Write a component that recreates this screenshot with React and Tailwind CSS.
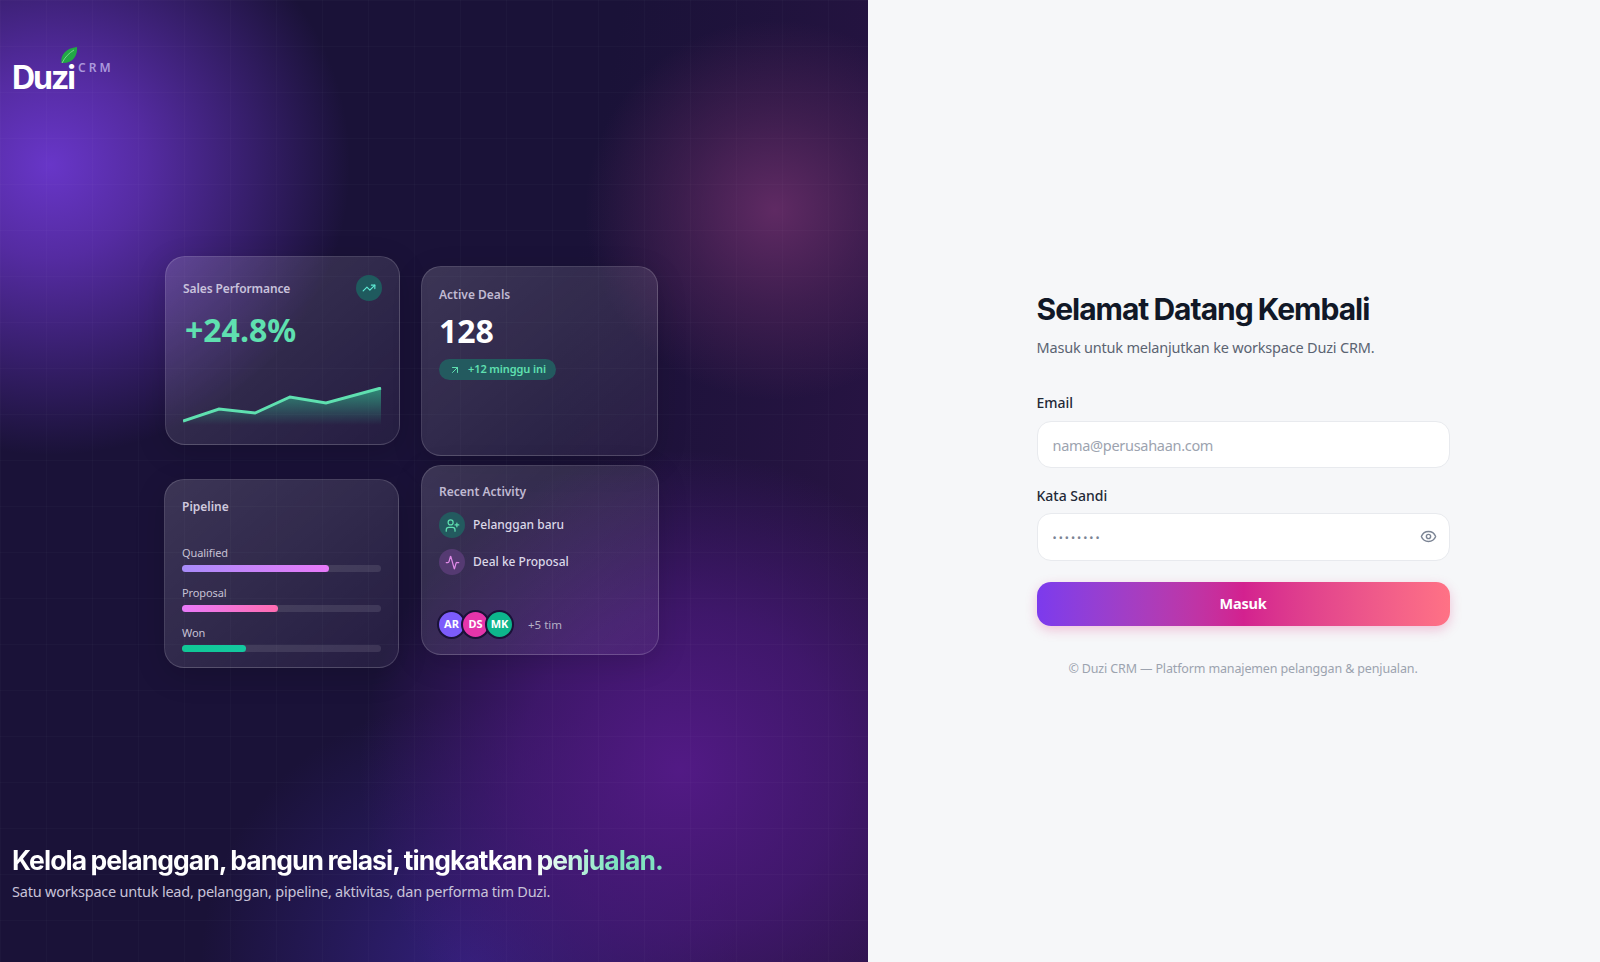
import { ArrowUpRight, Eye, TrendingUp, UserPlus, Activity } from 'lucide-react'

const head = { fontFamily: 'Inter, sans-serif' }

const bars = [
  { label: 'Qualified', width: '74%', cls: 'bg-gradient-to-r from-[#a78bfa] to-[#e879f9]' },
  { label: 'Proposal', width: '48%', cls: 'bg-gradient-to-r from-[#e879f9] to-[#ff6bb0]' },
  { label: 'Won', width: '32%', cls: 'bg-gradient-to-r from-[#10c896] to-[#14c8a0]' },
]

const cardCls =
  'rounded-[20px] border border-white/15 bg-gradient-to-br from-white/15 to-white/5 shadow-[0_8px_30px_rgba(0,0,0,0.15)]'

function Logo() {
  return (
    <div className="flex items-start text-white">
      <div className="relative">
        <span className="block text-[32px] leading-[40px] font-bold tracking-[-2px]" style={head}>Duzi</span>
        <svg className="absolute left-[48px] top-[-12px]" width="18" height="19" viewBox="0 0 18 19">
          <path d="M1.5 17C0 9 6 2 17 1c1 9-5 17-15.500 16z" fill="#22a845" />
          <path d="M2 17C5 11 9 7 14 4" stroke="#8de0a0" strokeWidth="0.8" fill="none" />
        </svg>
      </div>
      <span className="ml-[4px] mt-[1px] text-[12px] leading-[18px] font-semibold tracking-[3px] text-[#ab98dc]">CRM</span>
    </div>
  )
}

function SalesCard() {
  return (
    <div className={`${cardCls} h-[189px] w-[235px] px-[17px] pt-[16px]`}>
      <div className="flex items-center justify-between">
        <span className="pt-[2px] text-[12px] leading-[28px] font-semibold tracking-[-0.1px] text-[#c9c2dc]">Sales Performance</span>
        <span className="flex h-[26px] w-[26px] items-center justify-center rounded-full bg-[#1f5a5e]">
          <TrendingUp size={14} className="text-[#5eead4]" />
        </span>
      </div>
      <div className="mt-[7px] ml-[2px] text-[32px] leading-[40px] font-bold text-[#5fe0b0]">+24.8%</div>
      <svg className="mt-[37px] block" width="200" height="40" viewBox="0 0 200 40">
        <defs>
          <linearGradient id="spark" x1="0" y1="0" x2="0" y2="1">
            <stop offset="0%" stopColor="#34d399" stopOpacity="0.6" />
            <stop offset="100%" stopColor="#34d399" stopOpacity="0" />
          </linearGradient>
        </defs>
        <path d="M0 34L36 22 72 26 107 10 143 16 198 1V38H0z" fill="url(#spark)" />
        <path d="M0 34L36 22 72 26 107 10 143 16 198 1" stroke="#5fe0b0" strokeWidth="3" fill="none" />
      </svg>
    </div>
  )
}

function DealsCard() {
  return (
    <div className={`${cardCls} h-[190px] w-[237px] px-[17px] pt-[18px]`}>
      <div className="text-[12px] leading-[20px] font-semibold text-[#c0bad2]">Active Deals</div>
      <div className="mt-[6px] text-[32px] leading-[40px] font-bold text-white">128</div>
      <div className="mt-[8px] inline-flex h-[21px] items-center gap-[7px] rounded-full bg-[#235a5f] px-[10px] text-[11px] font-semibold tracking-[-0.1px] text-[#5fe0b0]">
        <ArrowUpRight size={12} />
        <span>+12 minggu ini</span>
      </div>
    </div>
  )
}

function PipelineCard() {
  return (
    <div className={`${cardCls} ml-[-1px] h-[189px] w-[235px] px-[17px] pt-[17px]`}>
      <div className="text-[12px] leading-[20px] font-semibold text-[#cfc9de]">Pipeline</div>
      <div className="mt-[27px] flex flex-col gap-[12px]">
        {bars.map((b) => (
          <div key={b.label}>
            <div className="text-[11px] leading-[17px] tracking-[-0.1px] text-[#c6c1d4]">{b.label}</div>
            <div className="mt-[4px] h-[7px] rounded-full bg-white/10">
              <div className={`h-full rounded-full ${b.cls}`} style={{ width: b.width }} />
            </div>
          </div>
        ))}
      </div>
    </div>
  )
}

function ActivityCard() {
  return (
    <div className={`${cardCls} h-[190px] w-[238px] px-[17px] pt-[16px]`}>
      <div className="text-[12px] leading-[20px] font-semibold text-[#c0bad2]">Recent Activity</div>
      <div className="mt-[10px] flex flex-col gap-[11px]">
        <div className="flex items-center gap-[8px]">
          <span className="flex h-[26px] w-[26px] items-center justify-center rounded-full bg-[#235a5f]">
            <UserPlus size={15} className="text-[#5fe0b0]" />
          </span>
          <span className="text-[12px] font-medium text-[#dcd8e8]">Pelanggan baru</span>
        </div>
        <div className="flex items-center gap-[8px]">
          <span className="flex h-[26px] w-[26px] items-center justify-center rounded-full bg-[#553a72]">
            <Activity size={15} className="text-[#e08be8]" />
          </span>
          <span className="text-[12px] font-medium text-[#dcd8e8]">Deal ke Proposal</span>
        </div>
      </div>
      <div className="ml-[-2px] mt-[35px] flex items-center">
        <span className="flex h-[29px] w-[29px] items-center justify-center rounded-full border-2 border-[#1a1238] bg-[#7c5cfc] text-[11px] font-bold text-white">AR</span>
        <span className="ml-[-5px] flex h-[29px] w-[29px] items-center justify-center rounded-full border-2 border-[#1a1238] bg-[#e535ab] text-[11px] font-bold text-white">DS</span>
        <span className="ml-[-5px] flex h-[29px] w-[29px] items-center justify-center rounded-full border-2 border-[#1a1238] bg-[#0db58c] text-[11px] font-bold text-white">MK</span>
        <span className="ml-[14px] text-[11.5px] text-[#b5afc6]">+5 tim</span>
      </div>
    </div>
  )
}

export default function App() {
  return (
    <div className="flex h-[962px] w-full overflow-hidden bg-[#f6f7f9]" style={{ fontFamily: '"Noto Sans", sans-serif' }}>
      {/* Left panel */}
      <div className="relative h-full w-[868px] shrink-0 bg-[radial-gradient(ellipse_300px_290px_at_50px_165px,#6836c8_0%,rgba(95,48,180,0.85)_32%,rgba(60,30,120,0)_100%),radial-gradient(circle_190px_at_775px_210px,#5f2a63_0%,rgba(90,40,95,0.5)_50%,rgba(70,30,80,0)_100%),radial-gradient(circle_320px_at_680px_770px,#521a85_0%,rgba(75,25,125,0.7)_50%,rgba(60,20,110,0)_100%),radial-gradient(circle_270px_at_470px_970px,#33207c_0%,rgba(45,30,110,0.6)_50%,rgba(40,25,100,0)_100%),linear-gradient(100deg,#1a1238_60%,#2a1445_100%)]">
        <div className="absolute inset-0 bg-[linear-gradient(rgba(255,255,255,0.02)_1px,transparent_1px),linear-gradient(90deg,rgba(255,255,255,0.02)_1px,transparent_1px)] bg-[size:46px_46px]" />
        <div className="relative flex h-full flex-col">
          <div className="pl-[12px] pt-[58px]"><Logo /></div>

          <div className="mt-[158px] flex gap-[21px] pl-[165px]">
            <div className="flex flex-col gap-[34px]">
              <SalesCard />
              <PipelineCard />
            </div>
            <div className="mt-[10px] flex flex-col gap-[9px]">
              <DealsCard />
              <ActivityCard />
            </div>
          </div>

          <div className="mt-auto pb-[59px] pl-[12px]">
            <h2 className="w-[652px] whitespace-nowrap bg-gradient-to-r from-white from-[80%] to-[#7fe3c0] to-[92%] bg-clip-text text-[26.5px] leading-[36px] font-bold tracking-[-0.95px] text-transparent [word-spacing:-1px]" style={head}>
              Kelola pelanggan, bangun relasi, tingkatkan penjualan.
            </h2>
            <p className="mt-[1px] text-[14.5px] leading-[24px] tracking-[-0.22px] text-[#c8c3d8]">
              Satu workspace untuk lead, pelanggan, pipeline, aktivitas, dan performa tim Duzi.
            </p>
          </div>
        </div>
      </div>

      {/* Right panel */}
      <div className="flex-1 pl-[168.5px] pt-[289px]">
        <div className="w-[413px]">
          <h1 className="text-[30px] leading-[40px] font-bold tracking-[-1px] text-[#111827] [word-spacing:-1px]" style={head}>Selamat Datang Kembali</h1>
          <p className="mt-[6px] text-[14.5px] leading-[24px] tracking-[-0.2px] text-[#5b6472]">Masuk untuk melanjutkan ke workspace Duzi CRM.</p>

          <label className="mt-[33px] block text-[14px] leading-[22px] font-medium text-[#1f2937]">Email</label>
          <input
            placeholder="nama@perusahaan.com"
            className="mt-[7px] h-[47px] w-full rounded-[14px] border border-[#e8eaee] bg-white px-[15px] text-[14.5px] tracking-[-0.3px] outline-none placeholder:text-[#9ca3af]"
          />

          <label className="mt-[17px] block text-[14px] leading-[22px] font-medium text-[#1f2937]">Kata Sandi</label>
          <div className="relative mt-[6px]">
            <input
              type="password"
              defaultValue="password"
              className="h-[48px] w-full rounded-[14px] border border-[#e8eaee] bg-white px-[15px] text-[11px] tracking-[2px] text-[#7b8494] outline-none"
            />
            <Eye size={17} className="absolute right-[13px] top-[15px] text-[#7b8494]" />
          </div>

          <button className="mt-[21px] h-[44px] w-full rounded-[14px] bg-gradient-to-r from-[#7c3aed] via-[#d3218f] to-[#ff7285] text-[14.5px] font-bold tracking-[-0.2px] text-white shadow-[0_4px_12px_rgba(219,39,119,0.25)]">
            Masuk
          </button>

          <p className="mt-[33px] text-center text-[12.5px] leading-[20px] tracking-[-0.14px] text-[#9ca3af]">© Duzi CRM — Platform manajemen pelanggan &amp; penjualan.</p>
        </div>
      </div>
    </div>
  )
}
